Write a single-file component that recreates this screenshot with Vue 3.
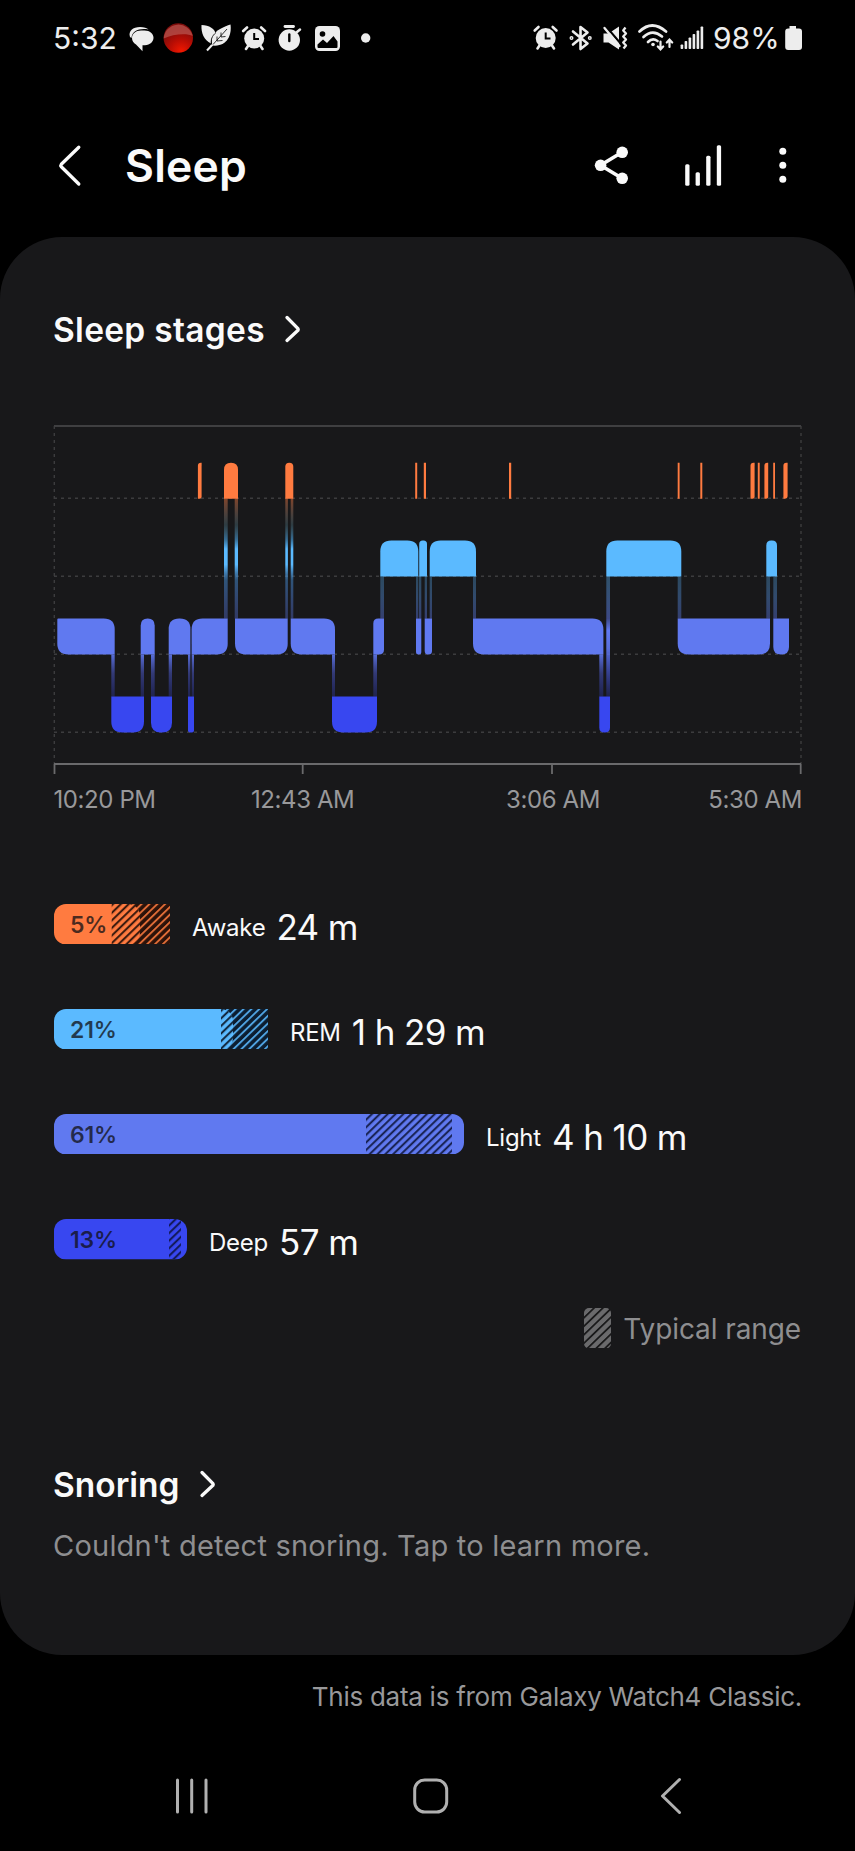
<template>
  <div class="screen">
    <div class="status-bar">
      <span class="clock">5:32</span>
      <svg width="36" height="30" viewBox="0 0 36 30" fill="#ededed">
        <path d="M6 14C4 8 9 4 16 4c4 0 7 1 8.5 2.5C15 5 8 8 7.5 15z" />
        <path d="M17 7.5h3.5c5.500 0 9 3.300 9 7.300s-3.500 7.400-8.500 7.400h-2.500v6l-6.500-6.600C9.500 20 8 18 8 15c0-4.300 3.700-7.500 9-7.500z" />
      </svg>
      <svg width="36" height="30" viewBox="0 0 36 30">
        <defs>
          <radialGradient id="ball" cx="0.6" cy="0.95" r="0.8">
            <stop offset="0" stop-color="#f21800" />
            <stop offset="0.5" stop-color="#b80d04" />
            <stop offset="1" stop-color="#7c0c0a" />
          </radialGradient>
        </defs>
        <circle cx="18.3" cy="15" r="14.7" fill="url(#ball)" />
        <path d="M3.700 15.500a14.700 14.700 0 0 1 29-2.500C27 10 13 11 3.700 15.500z" fill="#b8534e" opacity="0.75" />
      </svg>
      <svg width="40" height="30" viewBox="0 0 40 30">
        <path d="M5.500 2C13 2 19.500 6 19.500 11c-3 3-5 5-4.500 9.500C8 17 5 10 5.500 2z" fill="#ededed" />
        <path d="M34.500 1.500C36 12 31 24 16.500 22.500 C13 12 21 6 34.500 1.500z" fill="#ededed" />
        <path d="M17 21L11 27.500" fill="none" stroke="#ededed" stroke-width="2" />
        <path d="M20 9.500c-4 3.500-5.500 7-4.500 12M31 6L17 21.500M25 9.500v4.500l4.500-.5M21 13.500v4.500l5.500-.5" fill="none" stroke="#000" stroke-width="0.8" />
      </svg>
      <svg width="36" height="30" viewBox="0 0 36 30">
        <use href="#alarm" x="6" y="2.5" />
      </svg>
      <svg width="36" height="30" viewBox="0 0 36 30">
        <path d="M13 3.500h8.500" stroke="#ededed" stroke-width="2.8" stroke-linecap="round" />
        <path d="M25 9l3-2.500" stroke="#ededed" stroke-width="2.5" stroke-linecap="round" />
        <circle cx="17.3" cy="17" r="10.7" fill="#ededed" />
        <path d="M17.300 11.500v6.500" stroke="#000" stroke-width="2.4" stroke-linecap="round" />
      </svg>
      <svg width="40" height="30" viewBox="0 0 40 30">
        <rect x="7" y="3" width="25" height="25" rx="4.5" fill="#ededed" />
        <circle cx="14.5" cy="11" r="2.8" fill="#000" />
        <path d="M9.500 24v-2.500l5.500-5 4 3.500 6.500-7 4 5.500V24a1 1 0 0 1-1 1h-18a1 1 0 0 1-1-1z" fill="#000" />
      </svg>
      <svg width="36" height="30" viewBox="0 0 36 30">
        <circle cx="17.7" cy="15" r="4.7" fill="#ededed" />
      </svg>

      <svg class="push" width="36" height="30" viewBox="0 0 36 30">
        <defs>
          <g id="alarm" fill="none" stroke="#ededed" stroke-linecap="round">
            <path d="M1.200 5.500L5 2M23 5.500L19.200 2" stroke-width="2.6" />
            <path d="M6 20.500l-2 3M18.500 20.500l2 3" stroke-width="2.6" />
            <circle cx="12.2" cy="13" r="10" fill="#ededed" stroke="none" />
            <path d="M12.200 7.500v6h4.800" stroke="#000" stroke-width="2" stroke-linecap="butt" />
          </g>
        </defs>
        <use href="#alarm" x="5.5" y="2" />
      </svg>
      <svg width="36" height="30" viewBox="0 0 36 30" fill="none" stroke="#ededed" stroke-width="2.6" stroke-linejoin="round" stroke-linecap="round">
        <path d="M9 8.500L23.500 20.500l-7 5.500V4L23.500 9.500 9 21.500" />
        <circle cx="7.5" cy="15" r="0.7" />
        <circle cx="25.8" cy="15" r="0.7" />
      </svg>
      <svg width="34" height="30" viewBox="0 0 34 30">
        <path d="M3.500 10.500h5L19 3.500v23L8.500 19.500h-5z" fill="#ededed" />
        <path d="M6 3.500L21 21" stroke="#000" stroke-width="2.2" />
        <path d="M4.500 5L19.500 23" stroke="#ededed" stroke-width="2.3" stroke-linecap="round" />
        <path d="M25.500 4.500l-2.300 3 2.800 3-2.800 3 2.800 3-2.800 3 2.800 3-2.500 3" fill="none" stroke="#ededed" stroke-width="2.3" stroke-linejoin="round" />
      </svg>
      <svg width="42" height="30" viewBox="0 0 42 30" fill="none" stroke="#ededed" stroke-linecap="round">
        <path d="M5.500 8.500Q18-3.500 32 8.500" stroke-width="2.7" />
        <path d="M9.500 14Q18.500 5.500 28 13.500" stroke-width="2.7" />
        <path d="M14 19Q18.500 14.500 23.500 18" stroke-width="2.7" />
        <circle cx="19" cy="21.5" r="1.8" fill="#ededed" stroke="none" />
        <path d="M26.500 18.500v7.500M23.800 23.500l2.700 2.900 2.700-2.900M35.500 24v-7M32.800 19.500l2.700-2.900 2.700 2.900" stroke-width="2.2" />
      </svg>
      <svg width="34" height="30" viewBox="0 0 34 30" fill="#ededed">
        <rect v-for="(h, i) in signalBars" :key="i" :x="4.6 + i * 4" :y="26 - h" width="2.6" :height="h" rx="0.8" />
      </svg>
      <span class="battery-text">98%</span>
      <svg width="19" height="30" viewBox="0 0 19 30" fill="#ededed">
        <path d="M6.500 3h6.500v2.500h3A3 3 0 0 1 19 8.500V24a3 3 0 0 1-3 3H5.200a3 3 0 0 1-3-3V8.500a3 3 0 0 1 3-3h1.300z" />
      </svg>
    </div>

    <header class="app-bar">
      <svg width="32" height="50" viewBox="0 0 32 50">
        <path d="M24.800 6.200L7.300 23.300a2 2 0 0 0 0 2.500L24.800 43" class="line" />
      </svg>
      <h1>Sleep</h1>
      <svg class="push" width="40" height="50" viewBox="0 0 40 50" fill="#fafafa">
        <path d="M30 11.300L8.500 24.300 30 37.300" fill="none" stroke="#fafafa" stroke-width="3.6" />
        <circle cx="8.6" cy="24.3" r="5.8" />
        <circle cx="30.2" cy="11.3" r="5.8" />
        <circle cx="30.2" cy="37.3" r="5.8" />
      </svg>
      <svg class="stats-icon" width="40" height="50" viewBox="0 0 40 50" fill="#fafafa">
        <rect x="3.2" y="23.3" width="4.3" height="21.4" rx="1.5" />
        <rect x="13.6" y="31.3" width="4.3" height="13.4" rx="1.5" />
        <rect x="24.2" y="14.7" width="4.3" height="30" rx="1.5" />
        <rect x="34.8" y="4.3" width="4.3" height="40.4" rx="1.5" />
      </svg>
      <svg width="20" height="50" viewBox="0 0 20 50" fill="#fafafa">
        <circle cx="9.8" cy="10.3" r="3.5" />
        <circle cx="9.8" cy="24.3" r="3.5" />
        <circle cx="9.8" cy="38.3" r="3.5" />
      </svg>
    </header>

    <main class="card">
      <h2 class="section-title stages-title">
        Sleep stages
        <svg width="18" height="30" viewBox="0 0 18 30"><path d="M3 2.500l11 11.200a1.500 1.500 0 0 1 0 1.600L3 25.500" class="line" /></svg>
      </h2>

      <svg class="chart" width="751" height="400" viewBox="-2 -6 751 400">
        <defs>
          <linearGradient id="light-deep" x1="0" y1="0" x2="0" y2="1">
            <stop offset="0" stop-color="#6079f0" stop-opacity="0.9" />
            <stop offset="0.45" stop-color="#4d5bd0" stop-opacity="0.5" />
            <stop offset="1" stop-color="#3847e8" stop-opacity="0.25" />
          </linearGradient>
          <linearGradient id="rem-light" x1="0" y1="0" x2="0" y2="1">
            <stop offset="0" stop-color="#5bbaff" stop-opacity="0.3" />
            <stop offset="0.5" stop-color="#5a9cf5" stop-opacity="0.38" />
            <stop offset="1" stop-color="#6079f0" stop-opacity="0.4" />
          </linearGradient>
          <linearGradient id="awake-light" x1="0" y1="0" x2="0" y2="1">
            <stop offset="0" stop-color="#ff7b40" stop-opacity="0.45" />
            <stop offset="0.22" stop-color="#55808f" stop-opacity="0.35" />
            <stop offset="0.34" stop-color="#4aa5e6" stop-opacity="0.6" />
            <stop offset="0.42" stop-color="#5bbaff" />
            <stop offset="0.55" stop-color="#5bbaff" />
            <stop offset="0.68" stop-color="#4690d8" stop-opacity="0.5" />
            <stop offset="1" stop-color="#6079f0" stop-opacity="0.35" />
          </linearGradient>
          <linearGradient id="rem-deep" x1="0" y1="0" x2="0" y2="1">
            <stop offset="0" stop-color="#5bbaff" stop-opacity="0.35" />
            <stop offset="0.35" stop-color="#6079f0" stop-opacity="0.5" />
            <stop offset="0.45" stop-color="#6079f0" stop-opacity="1" />
            <stop offset="0.6" stop-color="#6079f0" stop-opacity="0.9" />
            <stop offset="1" stop-color="#3847e8" stop-opacity="0.22" />
          </linearGradient>
        </defs>

        <path d="M0.300 0V338M747 0V338" class="guide" />
        <path v-for="y in [72.3, 150.3, 228.3, 306.3]" :key="y" :d="`M0 ${y}H747`" class="guide" />
        <path d="M0 0H747" stroke="#3f3f41" stroke-width="2" />
        <path d="M0 338H747" stroke="#6a6a6c" stroke-width="2" />
        <path d="M0.500 338v10M248.700 338v10M498 338v10M746.700 338v10" stroke="#6a6a6c" stroke-width="1.8" />

        <rect
          v-for="(c, i) in connectors"
          :key="'c' + i"
          :x="c[1]"
          :y="links[c[0]].top"
          :width="c[2] - c[1]"
          :height="links[c[0]].bottom - links[c[0]].top"
          :fill="`url(#${c[0]})`"
        />
        <path v-for="(b, i) in blocks" :key="'b' + i" :d="blockPath(b)" :fill="stageColor[b[0]]" />

        <text x="-0.5" y="381.7">10:20 PM</text>
        <text x="248.7" y="381.7" text-anchor="middle">12:43 AM</text>
        <text x="499" y="381.7" text-anchor="middle">3:06 AM</text>
        <text x="748" y="381.7" text-anchor="end">5:30 AM</text>
      </svg>

      <div class="totals">
        <div v-for="row in totals" :key="row.name" class="total">
          <svg :width="rowWidth(row)" height="40.5">
            <defs>
              <clipPath :id="'clip-' + row.name">
                <rect :width="row.width" height="40.5" rx="12" />
              </clipPath>
              <pattern :id="'out-' + row.name" width="5.45" height="5.45" patternUnits="userSpaceOnUse" patternTransform="rotate(46)">
                <rect width="5.45" height="5.45" :fill="row.dark" />
                <rect width="1.9" height="5.45" :fill="row.color" opacity="0.85" />
              </pattern>
              <pattern :id="'in-' + row.name" width="5.45" height="5.45" patternUnits="userSpaceOnUse" patternTransform="rotate(46)">
                <rect x="2" width="1.9" height="5.45" :fill="row.dark" />
              </pattern>
            </defs>
            <rect v-if="row.to > row.width" :x="row.from" width="100%" height="40.5" :fill="`url(#out-${row.name})`" />
            <g :clip-path="`url(#clip-${row.name})`">
              <rect :width="row.width" height="40.5" :fill="row.color" />
              <rect :x="row.from" :width="row.to - row.from" height="40.5" :fill="`url(#in-${row.name})`" />
            </g>
            <text x="16" y="28.8" class="percent">{{ row.percent }}%</text>
          </svg>
          <span class="name">{{ row.name }}</span>
          <span class="time">{{ row.time }}</span>
        </div>
      </div>

      <div class="legend">
        <svg width="27" height="40.5">
          <defs>
            <pattern id="typical" width="6.1" height="6.1" patternUnits="userSpaceOnUse" patternTransform="rotate(46)">
              <rect width="6.1" height="6.1" fill="#6a6a6c" />
              <rect width="1.8" height="6.1" fill="#19191a" />
            </pattern>
          </defs>
          <rect width="27" height="40.5" rx="5" fill="url(#typical)" />
        </svg>
        <span>Typical range</span>
      </div>

      <h2 class="section-title snoring-title">
        Snoring
        <svg width="18" height="30" viewBox="0 0 18 30"><path d="M3 2.500l11 11.200a1.500 1.500 0 0 1 0 1.600L3 25.500" class="line" /></svg>
      </h2>
      <p class="hint">Couldn't detect snoring. Tap to learn more.</p>
    </main>

    <p class="source">This data is from Galaxy Watch4 Classic.</p>

    <nav class="nav-bar">
      <svg width="40" height="40" viewBox="0 0 40 40"><path d="M5.500 4v32M19.700 4v32M34 4v32" /></svg>
      <svg width="40" height="40" viewBox="0 0 40 40"><rect x="3.7" y="4" width="32" height="32" rx="10" /></svg>
      <svg width="40" height="40" viewBox="0 0 40 40"><path d="M28.500 3.500L11.500 20l17 16.500" /></svg>
    </nav>
  </div>
</template>

<script setup>
const signalBars = [4.5, 8, 11.5, 15, 18.5, 22.5];

const stageColor = {
  awake: '#ff7b40',
  rem: '#5bbaff',
  light: '#6079f0',
  deep: '#3847f0'
};

const stageTop = { awake: 36.7, rem: 114.5, light: 192.5, deep: 270.6 };

// [stage, x start, x end, radii: top left, top right, bottom right, bottom left]
const blocks = [
  ['light', 3.3, 60.7, [1, 11, 0, 11]],
  ['deep', 57.3, 90, [0, 0, 11, 11]],
  ['light', 86.7, 100.7, [7, 7, 0, 0]],
  ['deep', 97, 118, [0, 0, 10, 10]],
  ['light', 114.7, 136.4, [10.5, 10.5, 0, 0]],
  ['deep', 134, 140, [0, 0, 2, 2]],
  ['light', 137.6, 173.7, [11, 0, 11, 0]],
  ['awake', 143.9, 147.6, [3, 0, 2, 0]],
  ['awake', 170, 184, [7, 7, 0, 0]],
  ['light', 181, 233.7, [0, 0, 11, 11]],
  ['awake', 231.3, 239.3, [4, 4, 0, 0]],
  ['light', 236.7, 281, [0, 11, 0, 11]],
  ['deep', 278, 323, [0, 0, 11, 11]],
  ['light', 319.3, 330, [5, 0, 5, 0]],
  ['rem', 326.3, 364.3, [11, 11, 0, 0]],
  ['awake', 361.2, 363.2, [0, 0, 0, 0]],
  ['light', 362, 367.3, [0, 0, 2.5, 2.5]],
  ['rem', 365.2, 373, [3.5, 3.5, 0, 0]],
  ['awake', 369.8, 372, [0, 0, 0, 0]],
  ['light', 370.7, 378, [0, 0, 3.5, 3.5]],
  ['rem', 375.7, 422, [11, 11, 0, 0]],
  ['light', 419, 549.4, [0, 11, 0, 11]],
  ['awake', 455, 457.2, [0, 0, 0, 0]],
  ['deep', 545.3, 556, [0, 0, 5, 5]],
  ['rem', 552.3, 627.3, [11, 11, 0, 0]],
  ['awake', 623.7, 625.6, [0, 0, 0, 0]],
  ['light', 623.7, 716, [0, 0, 11, 11]],
  ['awake', 646.3, 648.3, [0, 0, 0, 0]],
  ['awake', 696.5, 700.6, [3, 0, 2, 0]],
  ['awake', 703.8, 705.7, [0, 0, 0, 0]],
  ['awake', 710.4, 714.2, [3, 0, 2, 0]],
  ['rem', 712.3, 723, [5, 5, 0, 0]],
  ['light', 719.3, 735, [0, 0, 7.5, 7.5]],
  ['awake', 719.2, 721, [0, 0, 0, 0]],
  ['awake', 729.4, 733.6, [3, 0, 3, 0]]
];

const links = {
  'awake-light': { top: 72.5, bottom: 192.6 },
  'rem-light': { top: 150.5, bottom: 192.6 },
  'light-deep': { top: 228.5, bottom: 270.7 },
  'rem-deep': { top: 150.5, bottom: 270.7 }
};

const connectors = [
  ['light-deep', 57.3, 60.7],
  ['light-deep', 86.7, 90],
  ['light-deep', 97, 100.7],
  ['light-deep', 114.7, 118],
  ['light-deep', 134, 136.3],
  ['light-deep', 137.7, 140],
  ['awake-light', 170, 173.7],
  ['awake-light', 180.7, 184],
  ['awake-light', 231.3, 233.9],
  ['awake-light', 236.7, 239.3],
  ['light-deep', 278, 281],
  ['light-deep', 319.3, 323],
  ['rem-light', 326.3, 330],
  ['rem-light', 362, 364.3],
  ['rem-light', 365, 367.3],
  ['rem-light', 370.7, 373],
  ['rem-light', 375.7, 378],
  ['rem-light', 419, 422],
  ['light-deep', 545.3, 549.3],
  ['rem-deep', 552.3, 556],
  ['rem-light', 623.7, 627.3],
  ['rem-light', 712.3, 716],
  ['rem-light', 719.3, 723]
];

// width is the measured share, from/to is the typical range
const totals = [
  { name: 'Awake', percent: 5, time: '24 m', color: '#ff7b40', dark: '#2b120a', width: 86, from: 57.7, to: 116 },
  { name: 'REM', percent: 21, time: '1 h 29 m', color: '#5bbaff', dark: '#0c1d30', width: 179, from: 167, to: 214 },
  { name: 'Light', percent: 61, time: '4 h 10 m', color: '#6079f0', dark: '#131c48', width: 410, from: 312, to: 398 },
  { name: 'Deep', percent: 13, time: '57 m', color: '#3847f0', dark: '#10164e', width: 133, from: 115, to: 127 }
];

const rowWidth = (row) => Math.max(row.width, row.to);

const blockPath = ([stage, x1, x2, [tl, tr, br, bl]]) => {
  const top = stageTop[stage];
  const bottom = top + 36;
  return `M${x1 + tl} ${top}H${x2 - tr}Q${x2} ${top} ${x2} ${top + tr}V${bottom - br}` +
    `Q${x2} ${bottom} ${x2 - br} ${bottom}H${x1 + bl}Q${x1} ${bottom} ${x1} ${bottom - bl}` +
    `V${top + tl}Q${x1} ${top} ${x1 + tl} ${top}Z`;
};
</script>

<style>
body {
  margin: 0;
  background: #000;
}
</style>

<style scoped>
.screen {
  display: flex;
  flex-direction: column;
  width: 855px;
  height: 1851px;
  background: #000;
  color: #fafafa;
  font-family: Inter, Roboto, sans-serif;
  overflow: hidden;
}

h1,
h2,
p {
  margin: 0;
}

svg {
  display: block;
  flex: none;
}

.push {
  margin-left: auto;
}

.line {
  fill: none;
  stroke: #fafafa;
  stroke-width: 3.3;
  stroke-linecap: round;
  stroke-linejoin: round;
}

.status-bar {
  display: flex;
  align-items: center;
  height: 76px;
  padding: 0 53px;
  color: #ededed;
  font-size: 30px;
  line-height: 76px;
}

.clock {
  width: 71px;
}

.battery-text {
  width: 70px;
  padding-left: 3px;
  white-space: nowrap;
}

.app-bar {
  display: flex;
  align-items: center;
  box-sizing: border-box;
  height: 160.5px;
  padding: 65px 62px 45.5px 54px;
}

.app-bar h1 {
  margin-left: 39px;
  font-size: 44.5px;
  font-weight: 600;
  letter-spacing: 0.2px;
  line-height: 50px;
}

.stats-icon {
  margin: 0 51px 0 50px;
}

.card {
  box-sizing: border-box;
  height: 1418.5px;
  padding: 73px 53px 0 52px;
  border-radius: 62px;
  background: #18181a;
}

.section-title {
  display: flex;
  align-items: center;
  gap: 19.5px;
  height: 40px;
  padding-left: 1px;
  font-size: 33.5px;
  font-weight: 600;
  line-height: 40px;
}

.stages-title {
  letter-spacing: 0.3px;
}

.chart {
  margin-top: 70.5px;
}

.chart text {
  fill: #98989a;
  font-size: 24px;
  letter-spacing: -0.4px;
}

.guide {
  fill: none;
  stroke: #3c3c3e;
  stroke-width: 1.4;
  stroke-dasharray: 3 4;
}

.totals {
  display: flex;
  flex-direction: column;
  gap: 64.7px;
  margin-top: 83.5px;
  padding-left: 2px;
}

.total {
  display: flex;
  align-items: center;
  height: 40.5px;
}

.percent {
  fill: #101014;
  fill-opacity: 0.75;
  font-size: 23px;
  font-weight: 600;
  letter-spacing: -0.2px;
}

.name {
  margin-left: 22px;
  padding-top: 8px;
  font-size: 24px;
  letter-spacing: -0.25px;
  line-height: 48px;
}

.time {
  margin-left: 11px;
  padding-top: 6px;
  font-size: 35px;
  letter-spacing: -0.6px;
  line-height: 48px;
}

.legend {
  display: flex;
  align-items: center;
  justify-content: flex-end;
  gap: 12px;
  margin-top: 47px;
  padding-right: 1px;
  color: #8e8e90;
  font-size: 28px;
  letter-spacing: -0.1px;
  line-height: 40.5px;
}

.legend span {
  padding-top: 2px;
}

.snoring-title {
  margin-top: 116px;
}

.hint {
  margin-top: 20.5px;
  padding-left: 1px;
  color: #8e8e90;
  font-size: 29px;
  letter-spacing: 0.22px;
  line-height: 40px;
}

.source {
  margin-top: 22px;
  padding-right: 53px;
  color: #98989a;
  font-size: 26px;
  letter-spacing: -0.27px;
  line-height: 40px;
  text-align: right;
}

.nav-bar {
  display: flex;
  gap: 199.5px;
  margin-top: 59px;
  padding-left: 171.5px;
  fill: none;
  stroke: #b0b0b0;
  stroke-width: 3;
  stroke-linecap: round;
  stroke-linejoin: round;
}
</style>
